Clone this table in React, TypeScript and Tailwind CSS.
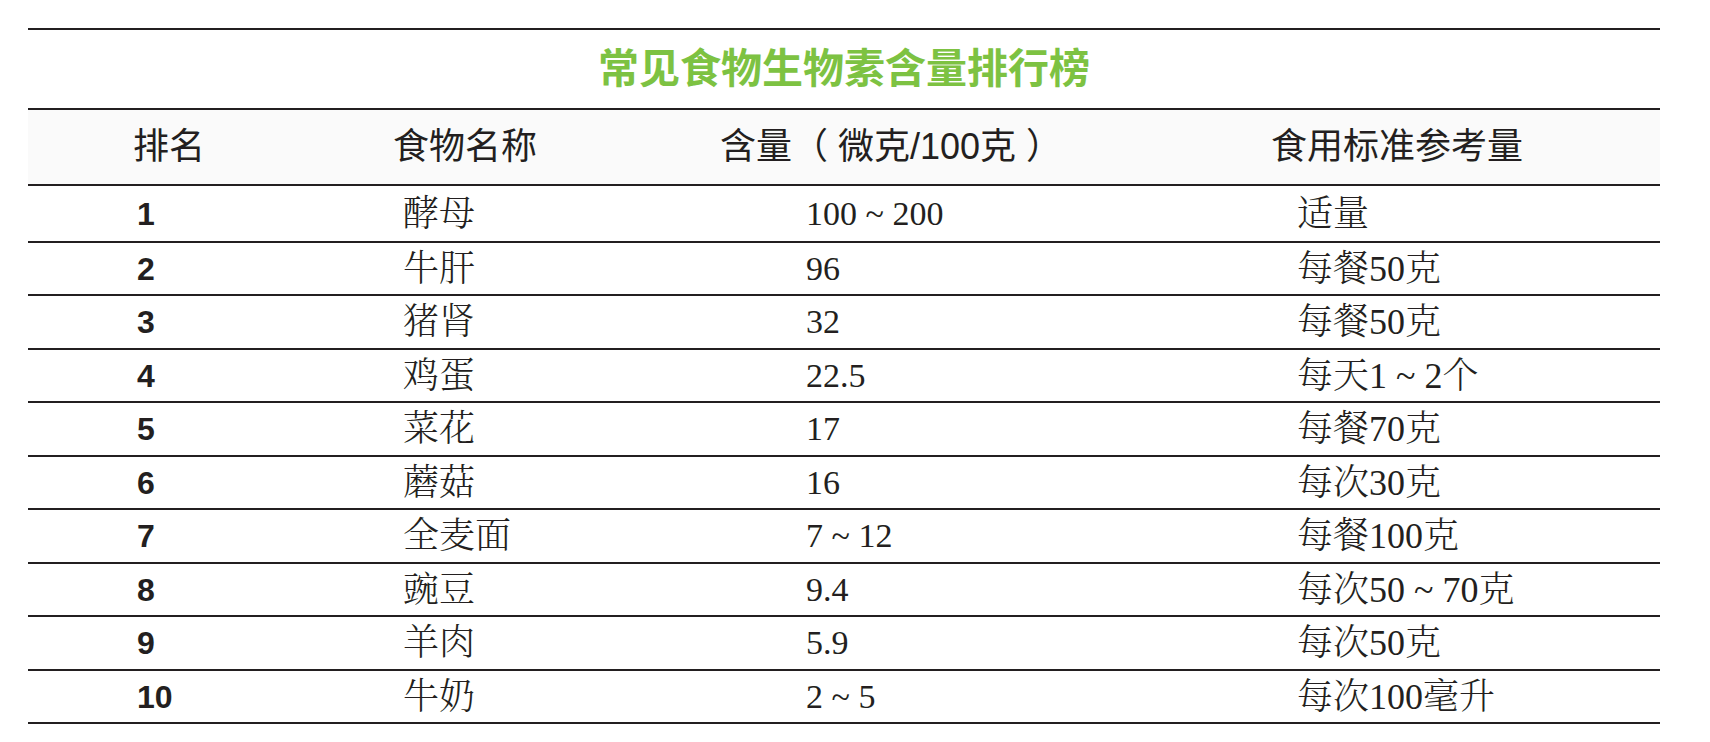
const rows = [
  { rank: "1", food: "酵母", amount: "100 ~ 200", usage: "适量", h: "h-[57px]" },
  { rank: "2", food: "牛肝", amount: "96", usage: "每餐50克", h: "h-[53px]" },
  { rank: "3", food: "猪肾", amount: "32", usage: "每餐50克", h: "h-[54px]" },
  { rank: "4", food: "鸡蛋", amount: "22.5", usage: "每天1 ~ 2个", h: "h-[53px]" },
  { rank: "5", food: "菜花", amount: "17", usage: "每餐70克", h: "h-[54px]" },
  { rank: "6", food: "蘑菇", amount: "16", usage: "每次30克", h: "h-[53px]" },
  { rank: "7", food: "全麦面", amount: "7 ~ 12", usage: "每餐100克", h: "h-[54px]" },
  { rank: "8", food: "豌豆", amount: "9.4", usage: "每次50 ~ 70克", h: "h-[53px]" },
  { rank: "9", food: "羊肉", amount: "5.9", usage: "每次50克", h: "h-[54px]" },
  { rank: "10", food: "牛奶", amount: "2 ~ 5", usage: "每次100毫升", h: "h-[53px]" },
];

const sans = "font-['Liberation_Sans','Noto_Sans_CJK_SC',sans-serif]";
const serif = "font-['Liberation_Serif','Noto_Serif_CJK_SC','Noto_Sans_CJK_SC',serif]";

export default function App() {
  return (
    <div className="min-h-screen bg-white pt-[28px] pl-[28px]">
      <div className="w-[1632px] border-t-2 border-[#231f20] text-[#231f20]">
        <div className="flex h-[80px] items-center justify-center border-b-2 border-[#231f20]">
          <h1 className={`${sans} text-[41px] font-bold leading-none text-[#7dc242]`}>
            常见食物生物素含量排行榜
          </h1>
        </div>

        <div
          className={`grid h-[76px] grid-cols-[365px_327px_551px_1fr] items-center border-b-2 border-[#231f20] bg-[#fafafa] text-[36px] leading-none ${sans}`}
        >
          <div className="pl-[105px]">排名</div>
          <div>食物名称</div>
          <div className="whitespace-pre">含量（ 微克/100克 ）</div>
          <div>食用标准参考量</div>
        </div>

        {rows.map((row) => (
          <div
            key={row.rank}
            className={`grid ${row.h} grid-cols-[365px_327px_551px_1fr] items-center border-b-2 border-[#231f20] leading-none`}
          >
            <div className={`pl-[109px] text-[32px] font-bold ${sans}`}>{row.rank}</div>
            <div className={`pl-[10px] text-[36px] font-light ${serif}`}>{row.food}</div>
            <div className={`pl-[86px] text-[34px] ${serif}`}>{row.amount}</div>
            <div className={`pl-[26px] text-[36px] font-light ${serif}`}>{row.usage}</div>
          </div>
        ))}
      </div>
    </div>
  );
}
